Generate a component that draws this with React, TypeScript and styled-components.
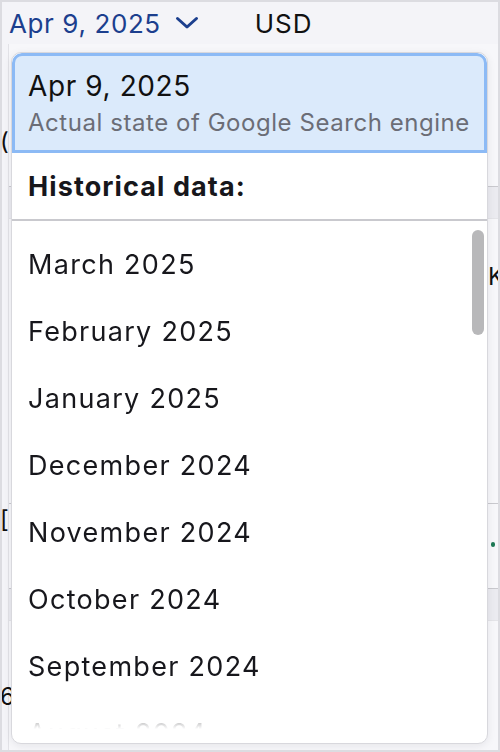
import React from "react";
import styled, { createGlobalStyle } from "styled-components";

const GlobalStyle = createGlobalStyle`
  html, body {
    margin: 0;
    padding: 0;
    height: 752px;
    overflow: hidden;
    background: #f4f4f8;
    font-family: Inter, "Noto Sans", sans-serif;
  }
`;

const Frame = styled.div`
  position: relative;
  box-sizing: border-box;
  height: 752px;
  border: 2px solid #dcdce1;
  background: #f4f4f8;
  overflow: hidden;
`;

const Header = styled.div`
  display: flex;
  align-items: center;
  height: 42px;
  padding: 0 0 0 7px;
  gap: 56px;
`;

const DateToggle = styled.button`
  display: flex;
  align-items: center;
  gap: 14px;
  border: 0;
  padding: 0;
  background: none;
  font-family: inherit;
  font-size: 26px;
  letter-spacing: 0.6px;
  color: #1c3f8e;
  cursor: pointer;
`;

const Currency = styled.span`
  font-size: 26px;
  letter-spacing: 1px;
  color: #111;
`;

/* table behind the dropdown, mostly hidden */
const Sheet = styled.div`
  display: flex;
  flex-direction: column;
  margin-left: 6px;
  border-left: 1px solid #e2e2e7;
  background: #f7f7fa;
`;

const SheetRow = styled.div<{ $h: number; $pad?: number; $band?: boolean }>`
  box-sizing: border-box;
  display: flex;
  align-items: flex-start;
  justify-content: space-between;
  height: ${p => p.$h}px;
  padding-top: ${p => p.$pad ?? 0}px;
  border-bottom: 1px solid ${p => (p.$band ? "#e4e4e8" : "#c9c9ce")};
  background: ${p => (p.$band ? "#ebebf0" : "#f7f7fa")};
  font-size: 24px;
  line-height: 28px;
  color: #111;
`;

const EdgeGlyph = styled.span`
  margin-left: -9px;
`;

const SideMarks = styled.div`
  display: flex;
  flex-direction: column;
  align-items: flex-end;
  gap: 8px;
  margin-right: -6px;
`;

const BlueTick = styled.span`
  width: 3px;
  height: 36px;
  margin-right: 2px;
  background: #3d7ff0;
`;

const GreenTick = styled.span`
  width: 4px;
  height: 5px;
  margin-right: 3px;
  margin-top: 36px;
  border-radius: 2px;
  background: #1e7a55;
`;

const Menu = styled.div`
  position: absolute;
  left: 9px;
  top: 50px;
  width: 477px;
  height: 692px;
  box-sizing: border-box;
  display: flex;
  flex-direction: column;
  background: #fff;
  border: 1px solid #d8d8dd;
  border-radius: 10px;
  box-shadow: 0 2px 8px rgba(20, 20, 40, 0.08);
  overflow: hidden;
`;

const Current = styled.div`
  box-sizing: border-box;
  display: flex;
  flex-direction: column;
  gap: 6px;
  height: 100px;
  padding: 14px 13px 12px;
  background: #dbeafb;
  border: 3px solid #8cbaf5;
  border-radius: 10px 10px 0 0;
`;

const CurrentDate = styled.div`
  font-size: 28px;
  line-height: 32px;
  letter-spacing: 0.6px;
  color: #111;
`;

const CurrentNote = styled.div`
  font-size: 24px;
  line-height: 30px;
  letter-spacing: 0.55px;
  color: #6b6d76;
  white-space: nowrap;
`;

const SectionTitle = styled.div`
  display: flex;
  align-items: center;
  height: 66px;
  padding: 0 16px;
  border-bottom: 2px solid #c9c9ce;
  font-size: 27px;
  font-weight: 700;
  letter-spacing: 1.1px;
  color: #17171c;
`;

const List = styled.div`
  position: relative;
  flex: 1;
  padding-top: 10px;
  overflow: hidden;
  -webkit-mask-image: linear-gradient(to bottom, #000 calc(100% - 42px), transparent calc(100% - 14px));
  mask-image: linear-gradient(to bottom, #000 calc(100% - 42px), transparent calc(100% - 14px));
`;

const Item = styled.div`
  display: flex;
  align-items: center;
  height: 67px;
  padding: 0 16px;
  font-size: 27px;
  letter-spacing: 1.3px;
  color: #17171c;
`;

const Thumb = styled.div`
  position: absolute;
  right: 3px;
  top: 9px;
  width: 12px;
  height: 105px;
  border-radius: 6px;
  background: #b8b8ba;
`;

const Chevron = () => (
  <svg width="24" height="14" viewBox="0 0 24 14" fill="none">
    <path d="M2.5 2.5 L12 11 L21.5 2.5" stroke="#1c3f8e" strokeWidth="3" strokeLinecap="round" strokeLinejoin="round" />
  </svg>
);

const months = [
  "March 2025",
  "February 2025",
  "January 2025",
  "December 2024",
  "November 2024",
  "October 2024",
  "September 2024",
  "August 2024",
];

export default function App() {
  return (
    <>
      <GlobalStyle />
      <Frame>
        <Header>
          <DateToggle>
            Apr 9, 2025
            <Chevron />
          </DateToggle>
          <Currency>USD</Currency>
        </Header>
        <Sheet>
          <SheetRow $h={143} $pad={84}>
            <EdgeGlyph>(</EdgeGlyph>
          </SheetRow>
          <SheetRow $h={32} $band />
          <SheetRow $h={285} $pad={44}>
            <span />
            <SideMarks>
              <span>K</span>
              <BlueTick />
            </SideMarks>
          </SheetRow>
          <SheetRow $h={85} $pad={2}>
            <EdgeGlyph>[</EdgeGlyph>
            <GreenTick />
          </SheetRow>
          <SheetRow $h={32} $band />
          <SheetRow $h={140} $pad={62}>
            <EdgeGlyph>6</EdgeGlyph>
          </SheetRow>
        </Sheet>

        <Menu>
          <Current>
            <CurrentDate>Apr 9, 2025</CurrentDate>
            <CurrentNote>Actual state of Google Search engine</CurrentNote>
          </Current>
          <SectionTitle>Historical data:</SectionTitle>
          <List>
            {months.map(m => (
              <Item key={m}>{m}</Item>
            ))}
            <Thumb />
          </List>
        </Menu>
      </Frame>
    </>
  );
}
